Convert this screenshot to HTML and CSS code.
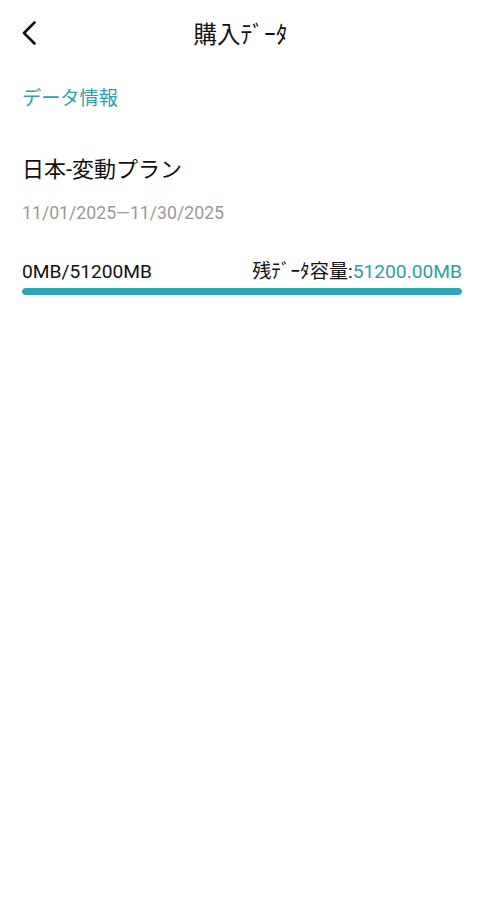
FILE: index.html
```html
<!DOCTYPE html>
<html lang="ja">
<head>
    <meta charset="UTF-8">
    <meta name="viewport" content="width=device-width, initial-scale=1.0">
    <title>購入ﾃﾞｰﾀ</title>
    <link rel="stylesheet" href="styles.css">
</head>
<body>

    <!-- Header -->
    <div class="header">
        <button class="back-button" aria-label="戻る">
            <svg width="16" height="26" viewBox="0 0 16 26">
                <path d="M13.5 2.5 L3 13 L13.5 23.5" fill="none" stroke="#111" stroke-width="2.6" stroke-linecap="round" stroke-linejoin="round"/>
            </svg>
        </button>
        <h1 class="title">購入ﾃﾞｰﾀ</h1>
    </div>

    <div class="content">
        <div class="section-title">データ情報</div>

        <!-- Plan card -->
        <div class="plan">
            <div class="plan-name">日本-変動プラン</div>
            <div class="plan-date">11/01/2025—11/30/2025</div>

            <div class="usage">
                <span class="used">0MB/51200MB</span>
                <span class="remain">残ﾃﾞｰﾀ容量:<span class="accent">51200.00MB</span></span>
            </div>
            <div class="bar">
                <div class="bar-fill" style="width: 100%;"></div>
            </div>
        </div>
    </div>

</body>
</html>
```

FILE: styles.css
```css
body {
    font-family: Roboto, "Noto Sans CJK JP", sans-serif;
    margin: 0;
    padding: 0;
    background-color: #ffffff;
    color: #111111;
}
.header {
    position: relative;
    height: 66px;
    display: flex;
    align-items: center;
    justify-content: center;
}
.back-button {
    position: absolute;
    left: 21px;
    top: 20px;
    padding: 0;
    border: none;
    background: none;
    cursor: pointer;
}
.title {
    margin: 0 0 0 -3px;
    font-size: 23.5px;
    font-weight: normal;
}
.content {
    padding: 0 22px;
}
.section-title {
    margin-top: 19px;
    font-size: 19.2px;
    line-height: 28px;
    color: #2a9fae;
}
.plan {
    margin-top: 43px;
}
.plan-name {
    font-size: 22px;
    line-height: 28px;
}
.plan-date {
    margin-top: 17px;
    font-size: 17.7px;
    line-height: 24px;
    color: #999999;
}
.usage {
    margin-top: 35px;
    display: flex;
    justify-content: space-between;
    align-items: baseline;
    font-size: 19.2px;
    line-height: 24px;
}
.accent {
    color: #2a9fae;
}
.bar {
    margin-top: 4px;
    height: 7px;
    border-radius: 4px;
    background-color: #e6e6e6;
    overflow: hidden;
}
.bar-fill {
    height: 100%;
    border-radius: 4px;
    background-color: #2aa6b5;
}
```
